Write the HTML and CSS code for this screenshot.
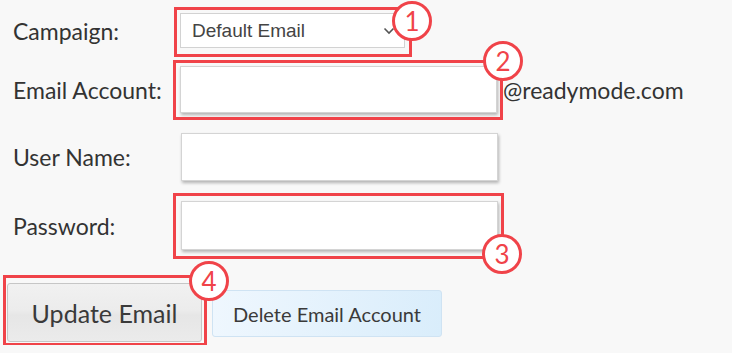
FILE: index.html
```html
<!DOCTYPE html>
<html>
<head>
<meta charset="utf-8">
<link rel="stylesheet" href="styles.css">
</head>
<body>
<form class="form">
  <div class="row row-1">
    <label class="lbl">Campaign:</label>
    <div class="mark mark-1">
      <div class="select">
        <span>Default Email</span>
        <svg class="chev" width="12" height="8" viewBox="0 0 12 8"><polyline points="1.5,1.5 6,6 10.5,1.5" fill="none" stroke="#555" stroke-width="1.6"/></svg>
      </div>
      <span class="badge badge-1">1</span>
    </div>
  </div>
  <div class="row row-2">
    <label class="lbl">Email Account:</label>
    <div class="mark mark-2">
      <input class="inp" type="text">
      <span class="badge badge-2">2</span>
    </div>
    <span class="suffix">@readymode.com</span>
  </div>
  <div class="row row-3">
    <label class="lbl">User Name:</label>
    <input class="inp inp-plain" type="text">
  </div>
  <div class="row row-4">
    <label class="lbl">Password:</label>
    <div class="mark mark-3">
      <input class="inp" type="password">
      <span class="badge badge-3">3</span>
    </div>
  </div>
  <div class="actions">
    <div class="mark mark-4">
      <button type="button" class="btn btn-update">Update Email</button>
      <span class="badge badge-4">4</span>
    </div>
    <button type="button" class="btn btn-delete">Delete Email Account</button>
  </div>
</form>
</body>
</html>
```
FILE: styles.css
```css
html, body {
  margin: 0;
  padding: 0;
  background: #f8f8f8;
}
body {
  font-family: Lato, "Open Sans", sans-serif;
  color: #333;
}
.form {
  padding-top: 13px;
}
.row {
  display: flex;
  align-items: center;
  padding-left: 13px;
}
.row-2 { margin-top: 18px; }
.row-3 { margin-top: 20px; }
.row-4 { margin-top: 20px; }
.lbl {
  width: 167px;
  flex: none;
  font-size: 23px;
  line-height: 28px;
  color: #333;
}
.mark {
  position: relative;
  display: block;
}
.mark::before {
  content: "";
  position: absolute;
  border: 3px solid #f04349;
  pointer-events: none;
}
.mark-1::before { left: -6px; right: -7px; top: -6px; bottom: -9px; }
.mark-2::before { left: -7px; right: -6px; top: -6px; bottom: -7px; }
.mark-3::before { left: -8px; right: -6px; top: -8px; bottom: -9px; }
.mark-4::before { left: -4px; right: -5px; top: -8px; bottom: -4px; }

.select {
  box-sizing: border-box;
  width: 225px;
  height: 35px;
  background: #fff;
  border: 1px solid #d2d2d2;
  display: flex;
  align-items: center;
  padding-left: 11px;
  font-family: "Liberation Sans", Arial, sans-serif;
  font-size: 19px;
  color: #444;
}
.chev {
  margin-left: auto;
  margin-right: 9px;
}
.inp {
  display: block;
  box-sizing: border-box;
  width: 317px;
  height: 48px;
  margin: 0;
  background: #fff;
  border: 1px solid #d4d4d4;
  box-shadow: 1px 2px 3px rgba(0, 0, 0, 0.28);
  outline: none;
}
.row-2 .inp { height: 47px; }
.row-4 .inp { height: 49px; }
.inp-plain { margin-left: 1px; }
.row-4 .mark-3 { margin-left: 1px; }
.suffix {
  margin-left: 6px;
  font-size: 23px;
  line-height: 28px;
  color: #333;
}
.badge {
  position: absolute;
  box-sizing: border-box;
  width: 40px;
  height: 40px;
  border: 3px solid #f04349;
  border-radius: 50%;
  background: #fff;
  color: #f04349;
  font-family: Lato, sans-serif;
  font-size: 26px;
  line-height: 34px;
  text-align: center;
}
.badge-1 { left: 212px; top: -12px; }
.badge-2 { left: 303px; top: -25px; }
.badge-3 { left: 301px; top: 33px; }
.badge-4 { left: 182px; top: -22px; }

.actions {
  display: flex;
  align-items: flex-start;
  gap: 10px;
  padding-left: 7px;
  margin-top: 33px;
  height: 62px;
}
.mark-4 {
  height: 59px;
}
.btn {
  box-sizing: border-box;
  margin: 0;
  padding: 0;
  border-radius: 3px;
  font-family: Lato, sans-serif;
  color: #3a3a3a;
  cursor: pointer;
}
.btn-update {
  display: block;
  width: 195px;
  height: 59px;
  font-size: 25px;
  border: 1px solid #c6c6c6;
  background: linear-gradient(#f1f1f1, #ececec 45%, #e6e6e6 55%, #ebebeb);
}
.btn-delete {
  display: block;
  width: 230px;
  height: 47px;
  font-size: 20px;
  border: 1px solid #cfe3f3;
  background: linear-gradient(100deg, #eff7fe, #d9edfb);
  margin-top: 7px;
}
```
